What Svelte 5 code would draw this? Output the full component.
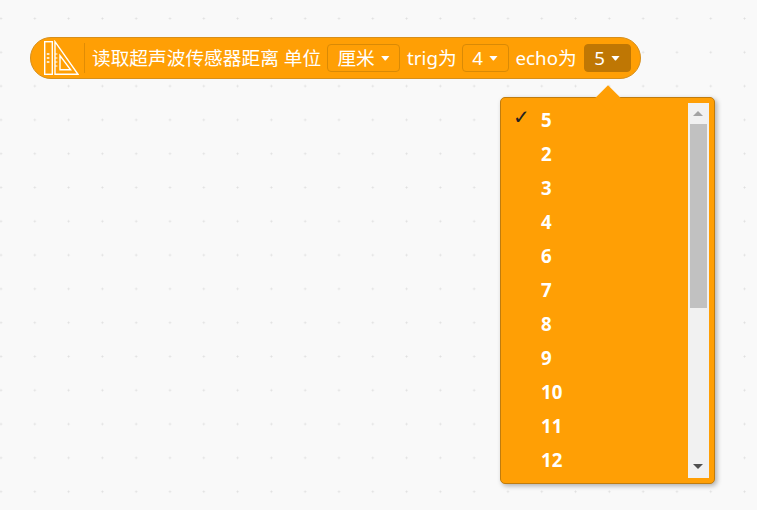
<script>
    const items = ['5', '2', '3', '4', '6', '7', '8', '9', '10', '11', '12']
    const selected = '5'
</script>

<div class="stage">
    <div class="block">
        <div class="block-icon">
            <svg width="36" height="36" viewBox="0 0 36 36" fill="none" stroke="#fff" stroke-width="1.4">
                <rect x="1.700" y="1.700" width="7.600" height="32.600" />
                <path d="M3.800 14h2.600M3.800 18h2.600M3.800 22h2.600" stroke-width="1.400" />
                <path d="M12 1.700V34.300H35Z" />
                <path d="M17 15.500V29.800H27.600Z" />
                <path d="M12 14h2.400M12 18h2.400M12 22h2.400M12 26h2.400" stroke-width="1.200" />
            </svg>
        </div>
        <span class="label">读取超声波传感器距离 单位</span>
        <div class="field cn">厘米<i class="caret"></i></div>
        <span class="label">trig为</span>
        <div class="field num trig">4<i class="caret"></i></div>
        <span class="label">echo为</span>
        <div class="field num open">5<i class="caret"></i></div>
    </div>

    <div class="popup">
        <i class="pointer"></i>
        <ul class="list">
            {#each items as item}
                <li>
                    <span class="check">{item === selected ? '✓' : ''}</span>
                    <span>{item}</span>
                </li>
            {/each}
        </ul>
        <div class="scrollbar">
            <i class="arrow up"></i>
            <div class="thumb"></div>
            <i class="arrow down"></i>
        </div>
    </div>
</div>

<style>
    :global(body) {
        background-color: #f9f9f9;
        background-image: radial-gradient(circle at 1.5px 1.5px, #dfdfdf 0.9px, transparent 1.1px);
        background-size: 33.8px 33.8px;
        background-position: -0.5px 17px;
    }
    .stage {
        position: relative;
        width: 757px;
        height: 510px;
        padding: 37px 0 0 30px;
        box-sizing: border-box;
        overflow: hidden;
        font-family: "Noto Sans", "Noto Sans CJK SC", sans-serif;
    }
    .block {
        display: inline-flex;
        align-items: center;
        box-sizing: border-box;
        width: 611px;
        height: 42px;
        background: #ff9f05;
        border: 1px solid #d68f1c;
        border-radius: 21px;
        color: #fff;
        font-size: 18.7px;
    }
    .block-icon {
        display: flex;
        align-items: center;
        flex: none;
        width: 54px;
        height: 30px;
        margin-right: 7px;
        padding-left: 12px;
        box-sizing: border-box;
        border-right: 1px solid #e08c05;
    }
    .label {
        white-space: pre;
        line-height: 28px;
    }
    .field {
        display: flex;
        align-items: center;
        justify-content: center;
        flex: none;
        box-sizing: border-box;
        height: 28px;
        margin: 0 7px 0 6px;
        border: 1px solid #d98a06;
        border-radius: 4px;
        line-height: 26px;
    }
    .cn { width: 73px; }
    .num { width: 47px; }
    .trig { margin-left: 5px; }
    .field.open {
        margin-left: 7px;
        background: #bf7704;
        border-color: #bf7704;
    }
    .caret {
        width: 9px;
        height: 5px;
        margin-left: 6px;
        background: #fff;
        clip-path: polygon(0 0, 100% 0, 55% 100%, 45% 100%);
    }
    .popup {
        position: absolute;
        left: 500px;
        top: 97px;
        display: flex;
        box-sizing: border-box;
        width: 215px;
        height: 387px;
        background: #ff9f05;
        border: 1px solid #c07c0e;
        border-radius: 5px;
        box-shadow: 2px 2px 5px rgba(0, 0, 0, 0.3);
    }
    .pointer {
        position: absolute;
        left: 98px;
        top: -9px;
        width: 18px;
        height: 18px;
        background: #ff9f05;
        transform: rotate(45deg);
    }
    .list {
        position: relative;
        flex: 1;
        margin: 0;
        padding: 4px 0 0;
        list-style: none;
        overflow: hidden;
    }
    li {
        display: flex;
        align-items: center;
        height: 34px;
        color: #fff;
        font-size: 18.7px;
        font-weight: 700;
    }
    .check {
        width: 40px;
        padding-left: 12px;
        box-sizing: border-box;
        color: #222;
        font-size: 20px;
        font-weight: 700;
        font-family: "DejaVu Sans", sans-serif;
        transform: translateY(-2px);
    }
    .scrollbar {
        position: relative;
        flex: none;
        width: 21px;
        height: 375px;
        margin: 5px 5px 0 0;
        background: #f1f1f1;
    }
    .thumb {
        position: absolute;
        top: 21px;
        left: 2px;
        width: 17px;
        height: 184px;
        background: #c1c1c1;
    }
    .arrow {
        position: absolute;
        left: 5px;
        width: 0;
        height: 0;
        border-left: 5px solid transparent;
        border-right: 5px solid transparent;
    }
    .up {
        top: 8px;
        border-bottom: 5px solid #a3a3a3;
    }
    .down {
        bottom: 9px;
        border-top: 5px solid #505050;
    }
</style>
